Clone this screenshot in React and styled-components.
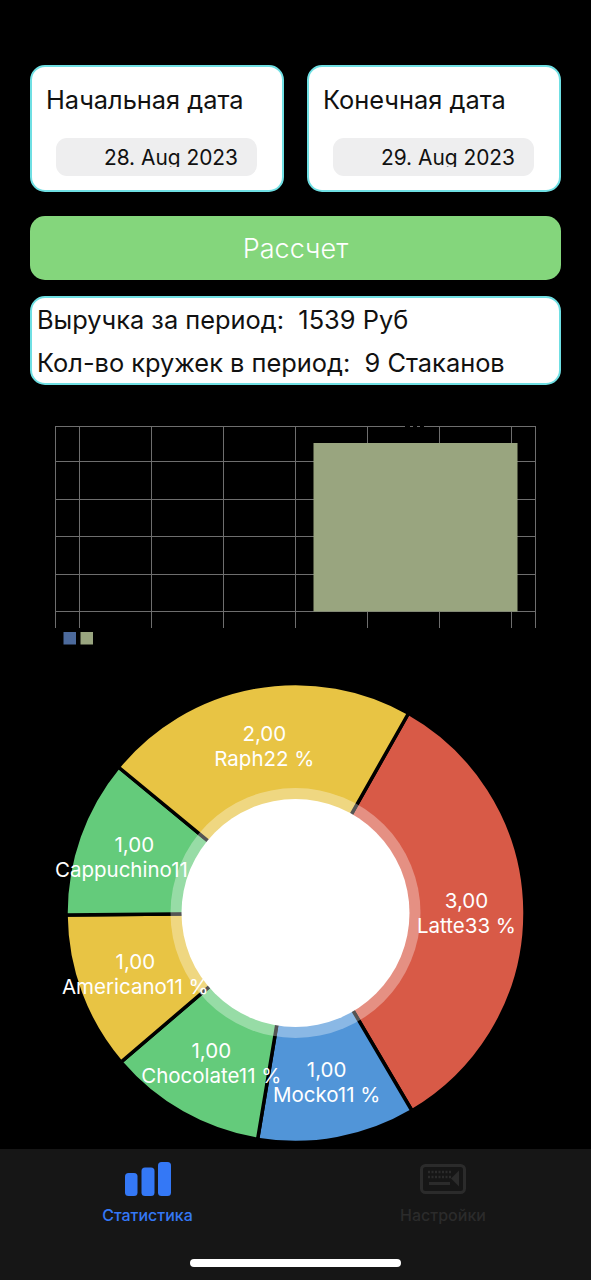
import React from "react";
import styled, { createGlobalStyle } from "styled-components";

const FONT = `Inter, "Noto Sans", sans-serif`;

const slices = [
  { label: "Latte33 %", value: "3,00", from: 29.5, to: 149.5, color: "#d85a47" },
  { label: "Mocko11 %", value: "1,00", from: 149.5, to: 189.5, color: "#5195d8" },
  { label: "Chocolate11 %", value: "1,00", from: 189.5, to: 229.5, color: "#64cb7b" },
  { label: "Americano11 %", value: "1,00", from: 229.5, to: 269.5, color: "#e8c444" },
  { label: "Cappuchino11 %", value: "1,00", from: 269.5, to: 309.5, color: "#64cb7b" },
  { label: "Raph22 %", value: "2,00", from: 309.5, to: 389.5, color: "#e8c444" },
];

const polar = (r, deg) => {
  const a = (deg * Math.PI) / 180;
  return [r * Math.sin(a), -r * Math.cos(a)];
};

const slicePath = (s) => {
  const [x1, y1] = polar(229.5, s.from);
  const [x2, y2] = polar(229.5, s.to);
  const large = s.to - s.from > 180 ? 1 : 0;
  return `M0 0L${x1} ${y1}A229.5 229.5 0 ${large} 1 ${x2} ${y2}Z`;
};

const GlobalStyle = createGlobalStyle`
  html, body {
    margin: 0;
    background: #000;
  }
`;

const Page = styled.div`
  width: 591px;
  height: 1280px;
  background: #000;
  display: flex;
  flex-direction: column;
  font-family: ${FONT};
  overflow: hidden;
`;

const Content = styled.main`
  flex: 1;
  min-height: 0;
  padding: 65px 30px 0;
  display: flex;
  flex-direction: column;
`;

const DateRow = styled.div`
  display: grid;
  grid-template-columns: 254px 254px;
  justify-content: space-between;
`;

const Panel = styled.div`
  box-sizing: border-box;
  background: #fff;
  border: 2px solid #6fdfe3;
  border-radius: 15px;
`;

const DateCard = styled(Panel)`
  height: 127px;
  padding: 17px 25px 0 14px;
`;

const DateTitle = styled.div`
  font-size: 25.4px;
  line-height: 32px;
  color: #111;
`;

const DatePill = styled.div`
  margin: 22px 0 0 10px;
  height: 38px;
  border-radius: 11px;
  background: #eeeeef;
  display: flex;
  justify-content: flex-end;
  padding: 6px 19px 0 0;
  box-sizing: border-box;
`;

/* the picker cuts the tail of the g, the same as in the app */
const DateValue = styled.span`
  display: block;
  height: 23px;
  overflow: hidden;
  font-size: 20.9px;
  line-height: 27px;
  color: #111;
`;

const CalcButton = styled.button`
  margin-top: 24px;
  height: 64px;
  flex-shrink: 0;
  border: 0;
  border-radius: 15px;
  background: #84d67c;
  color: #fff;
  font-family: ${FONT};
  font-size: 27px;
  font-weight: 300;
`;

const Result = styled(Panel)`
  margin-top: 16px;
  height: 89px;
  flex-shrink: 0;
  padding: 0 0 0 5px;
`;

const ResultRow = styled.div`
  font-size: 25.4px;
  line-height: 43px;
  color: #111;
  white-space: pre;
`;

const BarChart = styled.svg`
  display: block;
  flex-shrink: 0;
  margin: 36px 0 0 -30px;
`;

const PieChart = styled.svg`
  display: block;
  flex-shrink: 0;
  margin: 28px 0 0 -30px;
`;

const PieLabel = styled.text`
  font-family: ${FONT};
  font-size: 20.5px;
  fill: #fff;
  text-anchor: middle;
`;

const TabBar = styled.nav`
  flex-shrink: 0;
  height: 131px;
  background: #161616;
  display: flex;
  flex-direction: column;
  align-items: center;
`;

const Tabs = styled.div`
  align-self: stretch;
  display: grid;
  grid-template-columns: 295px 296px;
`;

const Tab = styled.div`
  display: flex;
  flex-direction: column;
  align-items: center;
  padding-top: 13px;
  color: ${(p) => (p.$active ? "#3478f6" : "#2b2b2b")};
`;

const TabIcon = styled.svg`
  display: block;
`;

const TabLabel = styled.span`
  margin-top: 10px;
  font-size: 16px;
  line-height: 18px;
  font-weight: 500;
`;

const HomeIndicator = styled.div`
  margin-top: 35px;
  width: 211px;
  height: 8px;
  border-radius: 4px;
  background: #fff;
`;

const gridX = [55.5, 79.5, 151.5, 223.5, 295.5, 367.5, 439.5, 511.5, 535.5];
const gridY = [426.5, 461.5, 499.5, 536.5, 574.5, 611.5];
const CHART_TOP = 421;

const Bars = () => (
  <BarChart width="591" height="232" viewBox={`0 ${CHART_TOP} 591 232`}>
    {gridX.map((x) => (
      <line key={x} x1={x} x2={x} y1="426" y2="628" stroke="#6e6e6e" />
    ))}
    {gridY.map((y) => (
      <line key={y} x1="55" x2="536" y1={y} y2={y} stroke="#6e6e6e" />
    ))}
    <rect x="313.5" y="443" width="204" height="168.5" fill="#99a57f" />
    <path d="M405 426.5h5M413 426.5h4M420 426.5h4" stroke="#000" strokeWidth="2" />
    <rect x="63.5" y="632" width="12.5" height="12.5" fill="#4c6a9c" />
    <rect x="80.5" y="632" width="12.5" height="12.5" fill="#99a57f" />
  </BarChart>
);

const Pie = () => (
  <PieChart width="591" height="464" viewBox="-295.5 -232 591 464">
    {slices.map((s) => (
      <path key={s.label} d={slicePath(s)} fill={s.color} stroke="#000" strokeWidth="3.5" />
    ))}
    <circle r="125" fill="#fff" fillOpacity="0.33" />
    <circle r="114" fill="#fff" />
    {slices.map((s) => {
      const [x, y] = polar(171, (s.from + s.to) / 2);
      return (
        <PieLabel key={s.label} x={x} y={y}>
          <tspan x={x} dy="-4">{s.value}</tspan>
          <tspan x={x} dy="25">{s.label}</tspan>
        </PieLabel>
      );
    })}
  </PieChart>
);

const StatsIcon = () => (
  <TabIcon width="46" height="34" viewBox="0 0 46 34" fill="currentColor">
    <rect x="0" y="11" width="12.5" height="23" rx="3.5" />
    <rect x="16.5" y="5.5" width="13" height="28.5" rx="3.5" />
    <rect x="33" y="0" width="13" height="34" rx="3.5" />
  </TabIcon>
);

const KeyboardIcon = () => (
  <TabIcon width="46" height="34" viewBox="0 0 46 34" fill="none">
    <rect x="1.5" y="3.5" width="43" height="27" rx="4" stroke="currentColor" strokeWidth="3" />
    <path d="M8 10h23M8 15h23" stroke="currentColor" strokeWidth="2.5" strokeDasharray="2 1.5" />
    <path d="M9 21.5h21" stroke="currentColor" strokeWidth="3" />
    <path d="M39 8.5v16l-8-8z" fill="currentColor" />
  </TabIcon>
);

export default function App() {
  return (
    <Page>
      <GlobalStyle />
      <Content>
        <DateRow>
          <DateCard>
            <DateTitle>Начальная дата</DateTitle>
            <DatePill><DateValue>28. Aug 2023</DateValue></DatePill>
          </DateCard>
          <DateCard>
            <DateTitle>Конечная дата</DateTitle>
            <DatePill><DateValue>29. Aug 2023</DateValue></DatePill>
          </DateCard>
        </DateRow>
        <CalcButton>Рассчет</CalcButton>
        <Result>
          <ResultRow>Выручка за период:  1539 Руб</ResultRow>
          <ResultRow>Кол-во кружек в период:  9 Стаканов</ResultRow>
        </Result>
        <Bars />
        <Pie />
      </Content>
      <TabBar>
        <Tabs>
          <Tab $active>
            <StatsIcon />
            <TabLabel>Статистика</TabLabel>
          </Tab>
          <Tab>
            <KeyboardIcon />
            <TabLabel>Настройки</TabLabel>
          </Tab>
        </Tabs>
        <HomeIndicator />
      </TabBar>
    </Page>
  );
}
